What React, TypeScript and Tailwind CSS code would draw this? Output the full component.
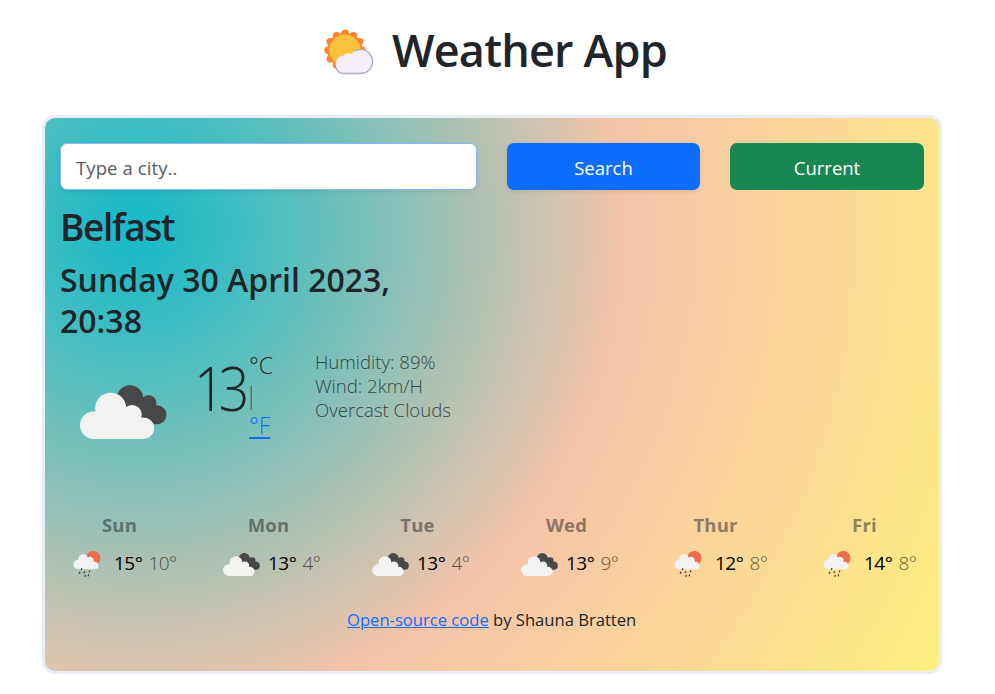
import React from "react";

function Logo() {
  const bumps = Array.from({ length: 12 }, (_, i) => {
    const a = (i / 12) * Math.PI * 2 - Math.PI / 2;
    return { x: 22 + Math.cos(a) * 17, y: 21.3 + Math.sin(a) * 17 };
  });
  return (
    <svg width="52" height="46" viewBox="0 0 52 46" className="shrink-0">
      {bumps.map((b, i) => (
        <circle key={i} cx={b.x} cy={b.y} r="3.7" fill="#ff822d" />
      ))}
      <circle cx="22" cy="21.3" r="17.6" fill="#ff822d" />
      <circle cx="22" cy="21.3" r="15.7" fill="#f9c23c" />
      <path
        d="M20 44.5 A9 9 0 0 1 12.8 34 A8 8 0 0 1 20.5 26.4 Q24 22.8 28 25 Q31 20.7 37.5 20.4 A12 12 0 0 1 37.5 44.5 Z"
        fill="#f3eef8"
      />
      <path
        d="M32 21.9 Q34.5 20.5 37.5 20.4 A12 12 0 0 1 37.5 44.5 H20.5 Q15 44.3 12.8 38.5"
        fill="none"
        stroke="#b4acbc"
        strokeWidth="1.4"
      />
    </svg>
  );
}

function Clouds({ className }: { className: string }) {
  return (
    <svg viewBox="0 0 87 54" className={className}>
      <g fill="#48484a">
        <circle cx="50" cy="13.4" r="13.2" />
        <circle cx="68.5" cy="18.2" r="8" />
        <circle cx="77" cy="29.7" r="9.5" />
        <path d="M42 20 L62 12 L76 22 L77 39.2 L60 36 Z" />
      </g>
      <g fill="#f2f2f0">
        <circle cx="30.7" cy="23.3" r="15.5" />
        <circle cx="13.8" cy="40.2" r="13.8" />
        <circle cx="52" cy="29.8" r="9.8" />
        <circle cx="63.3" cy="43.2" r="10.8" />
        <path d="M13.5 30 L30 20 L52 28 L63 40 V54 H13.8 Z" />
      </g>
    </svg>
  );
}

function Rain({ className }: { className: string }) {
  return (
    <svg viewBox="0 0 28 27" className={className}>
      <circle cx="20.3" cy="7.2" r="7.2" fill="#ec6e4c" />
      <path
        d="M5 18.3 A4.7 4.7 0 0 1 5.3 8.8 A5 5 0 0 1 14.9 6.5 A3.8 3.8 0 0 1 20.6 11 A3.7 3.7 0 0 1 22.6 18.3 Z"
        fill="#f2f2f2"
      />
      <path
        d="M9 17.3 l-.8 1.8 M7 20.8 l-.9 1.8 M11.8 20.2 l-.9 1.8 M17 19.5 l-.9 1.8 M12.4 24 l-.8 1.8 M15.8 23.4 l-.8 1.8"
        stroke="#3d3d3f"
        strokeWidth="1.3"
      />
    </svg>
  );
}

const days = [
  { name: "Sun", rain: true, max: 15, min: 10 },
  { name: "Mon", rain: false, max: 13, min: 4 },
  { name: "Tue", rain: false, max: 13, min: 4 },
  { name: "Wed", rain: false, max: 13, min: 9 },
  { name: "Thur", rain: true, max: 12, min: 8 },
  { name: "Fri", rain: true, max: 14, min: 8 },
];

export default function App() {
  return (
    <div className="h-[694px] overflow-hidden bg-white pl-[42px] font-['Open_Sans',sans-serif] text-[#212529]">
      <header className="flex h-[115px] w-[900px] pl-[281px] pt-[29px]">
        <Logo />
        <h1 className="ml-[17px] mt-[-9px] whitespace-nowrap text-[45px] font-semibold leading-[60px] tracking-[-0.8px]">
          Weather App
        </h1>
      </header>
      <main className="h-[559px] w-[900px] rounded-[13px] border-[3px] border-[#e9edf6] bg-[radial-gradient(circle_at_10%_20%,#14b9c8_0%,#48bec0_14%,#f7c4aa_54%,#fef080_100%)]">
        <form className="flex px-[15px] pt-[25px] text-[18.5px]">
          <input
            placeholder="Type a city.."
            className="h-[47px] w-[417px] rounded-[7px] border border-[#86b7fe] bg-white px-[15px] pt-[2px] tracking-[0.1px] shadow-[0_2px_4px_rgba(0,0,0,0.075)] outline-none placeholder:text-[#595c5f]"
          />
          <button type="button" className="ml-[30px] h-[47px] w-[193px] rounded-[7px] bg-[#0d6efd] pt-[2px] text-white shadow-[0_2px_4px_rgba(0,0,0,0.075)]">
            Search
          </button>
          <button type="button" className="ml-[30px] h-[47px] w-[194px] rounded-[7px] bg-[#198754] pt-[2px] text-white">
            Current
          </button>
        </form>
        <section className="h-[145px] pl-[15px] pt-[13px]">
          <h2 className="text-[37px] font-semibold leading-[48px] tracking-[-1.3px]">Belfast</h2>
          <h3 className="mt-[8px] w-[360px] text-[32px] font-semibold leading-[41px]">
            Sunday 30 April 2023, 20:38
          </h3>
        </section>
        <section className="flex h-[164px] pt-[15px]">
          <Clouds className="ml-[35px] mt-[35px] h-[54px] w-[87px]" />
          <div className="ml-[27px] mt-[8px] w-[54px] origin-left scale-x-90 whitespace-nowrap text-[60px] font-light leading-[60px] tracking-[-7px]">
            13
          </div>
          <div className="ml-px flex h-[92px] w-[65px] flex-col text-[23px] font-light leading-[30px]">
            <span>°C</span>
            <span className="ml-[-4px] text-[#212529]/70">|</span>
            <a href="#" className="w-[21px] text-[#0d6efd] underline decoration-2 underline-offset-[3px]">
              °F
            </a>
          </div>
          <ul className="ml-px whitespace-nowrap text-[18.6px] font-light leading-[24px] opacity-80">
            <li>Humidity: 89%</li>
            <li>Wind: 2km/H</li>
            <li>Overcast Clouds</li>
          </ul>
        </section>
        <section className="grid h-[109px] grid-cols-6 pt-[14px]">
          {days.map((d) => (
            <div key={d.name} className="flex flex-col">
              <div className="text-center text-[18.5px] font-bold leading-[24px] tracking-[0.2px] opacity-50">{d.name}</div>
              <div className={`mt-[10px] flex h-[32px] whitespace-nowrap text-[19px] leading-[32px] tracking-[-0.5px] text-black ${d.rain && d.min < 10 ? "pl-[5px]" : ""}`}>
                {d.rain ? (
                  <Rain className="ml-[28px] mr-[13px] mt-[4px] h-[27px] w-[28px]" />
                ) : (
                  <Clouds className="ml-[29px] mr-[8px] mt-[6px] h-[23px] w-[37px]" />
                )}
                <span>{d.max}°</span>
                <span className="ml-[6px] font-light opacity-60">{d.min}°</span>
              </div>
            </div>
          ))}
        </section>
        <footer className="whitespace-nowrap pl-[302px] text-[16.6px] leading-[24px]">
          <a href="#" className="text-[#0d6efd] underline">Open-source code</a> by Shauna Bratten
        </footer>
      </main>
    </div>
  );
}
